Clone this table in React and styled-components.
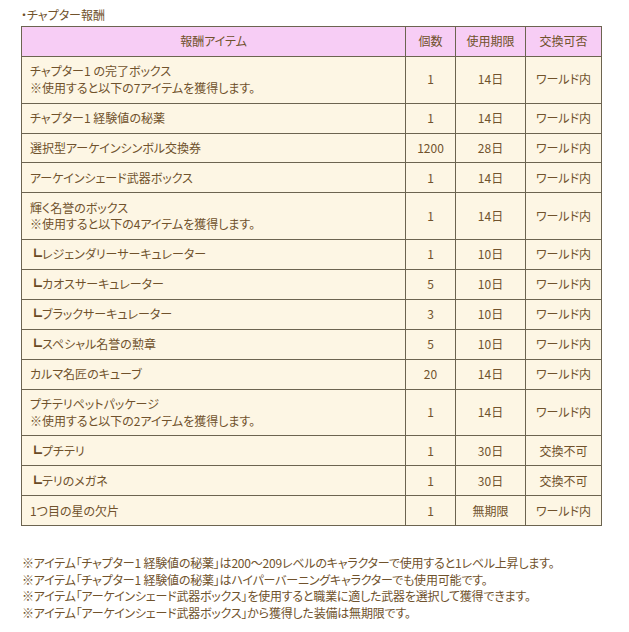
import React from "react";
import styled, { createGlobalStyle } from "styled-components";

const GlobalStyle = createGlobalStyle`
  body {
    margin: 0;
    background: #ffffff;
    color: #70522c;
    font-family: "Noto Sans CJK JP", "Noto Sans", sans-serif;
    font-size: 12px;
    font-feature-settings: "palt";
  }
`;

const rewards = [
  { name: "チャプター1 の完了ボックス", note: "※使用すると以下の7アイテムを獲得します。", qty: "1", term: "14日", trade: "ワールド内" },
  { name: "チャプター1 経験値の秘薬", qty: "1", term: "14日", trade: "ワールド内" },
  { name: "選択型アーケインシンボル交換券", qty: "1200", term: "28日", trade: "ワールド内" },
  { name: "アーケインシェード武器ボックス", qty: "1", term: "14日", trade: "ワールド内" },
  { name: "輝く名誉のボックス", note: "※使用すると以下の4アイテムを獲得します。", qty: "1", term: "14日", trade: "ワールド内" },
  { name: "レジェンダリーサーキュレーター", sub: true, qty: "1", term: "10日", trade: "ワールド内" },
  { name: "カオスサーキュレーター", sub: true, qty: "5", term: "10日", trade: "ワールド内" },
  { name: "ブラックサーキュレーター", sub: true, qty: "3", term: "10日", trade: "ワールド内" },
  { name: "スペシャル名誉の勲章", sub: true, qty: "5", term: "10日", trade: "ワールド内" },
  { name: "カルマ名匠のキューブ", qty: "20", term: "14日", trade: "ワールド内" },
  { name: "プチテリペットパッケージ", note: "※使用すると以下の2アイテムを獲得します。", qty: "1", term: "14日", trade: "ワールド内" },
  { name: "プチテリ", sub: true, qty: "1", term: "30日", trade: "交換不可" },
  { name: "テリのメガネ", sub: true, qty: "1", term: "30日", trade: "交換不可" },
  { name: "1つ目の星の欠片", qty: "1", term: "無期限", trade: "ワールド内" },
];

const notes = [
  "※アイテム「チャプター1 経験値の秘薬」は200～209レベルのキャラクターで使用すると1レベル上昇します。",
  "※アイテム「チャプター1 経験値の秘薬」はハイパーバーニングキャラクターでも使用可能です。",
  "※アイテム「アーケインシェード武器ボックス」を使用すると職業に適した武器を選択して獲得できます。",
  "※アイテム「アーケインシェード武器ボックス」から獲得した装備は無期限です。",
];

function App() {
  return (
    <Page>
      <GlobalStyle />
      <Title>・チャプター報酬</Title>
      <Table>
        <colgroup>
          <col style={{ width: 384 }} />
          <col style={{ width: 50 }} />
          <col style={{ width: 70 }} />
          <col style={{ width: 76 }} />
        </colgroup>
        <thead>
          <tr>
            <HeadCell>報酬アイテム</HeadCell>
            <HeadCell>個数</HeadCell>
            <HeadCell>使用期限</HeadCell>
            <HeadCell>交換可否</HeadCell>
          </tr>
        </thead>
        <tbody>
          {rewards.map((r) => (
            <tr key={r.name}>
              <Cell $align="left">
                {r.sub && <Branch>┗</Branch>}
                {r.name}
                {r.note && (
                  <>
                    <br />
                    {r.note}
                  </>
                )}
              </Cell>
              <Cell>{r.qty}</Cell>
              <Cell>{r.term}</Cell>
              <Cell>{r.trade}</Cell>
            </tr>
          ))}
        </tbody>
      </Table>
      <Notes>
        {notes.map((n) => (
          <li key={n}>{n}</li>
        ))}
      </Notes>
    </Page>
  );
}

const Page = styled.div`
  padding: 7px 0 0 21px;
`;

const Title = styled.div`
  line-height: 16px;
  margin-bottom: 3px;
`;

const Table = styled.table`
  width: 580px;
  table-layout: fixed;
  border-collapse: collapse;
  background: #fdf6e4;
`;

const HeadCell = styled.th`
  background: #f7cdf5;
  border: 1px solid #6c6450;
  font-weight: normal;
  line-height: 16.6px;
  padding: 6.2px 0;
  text-align: center;
`;

const Cell = styled.td`
  border: 1px solid #6c6450;
  line-height: 16.6px;
  padding: 6.2px ${(p) => (p.$align === "left" ? "8px" : "0")};
  text-align: ${(p) => p.$align || "center"};
  vertical-align: middle;
`;

const Branch = styled.span`
  display: inline-block;
  font-size: 14px;
  font-weight: 700;
  line-height: 0;
  margin: 0 0 0 -2px;
  vertical-align: -2px;
  color: #6a4a24;
`;

const Notes = styled.ul`
  list-style: none;
  margin: 29px 0 0;
  padding: 0 0 0 1px;
  line-height: 16.4px;
  letter-spacing: -0.2px;
`;

export default App;
